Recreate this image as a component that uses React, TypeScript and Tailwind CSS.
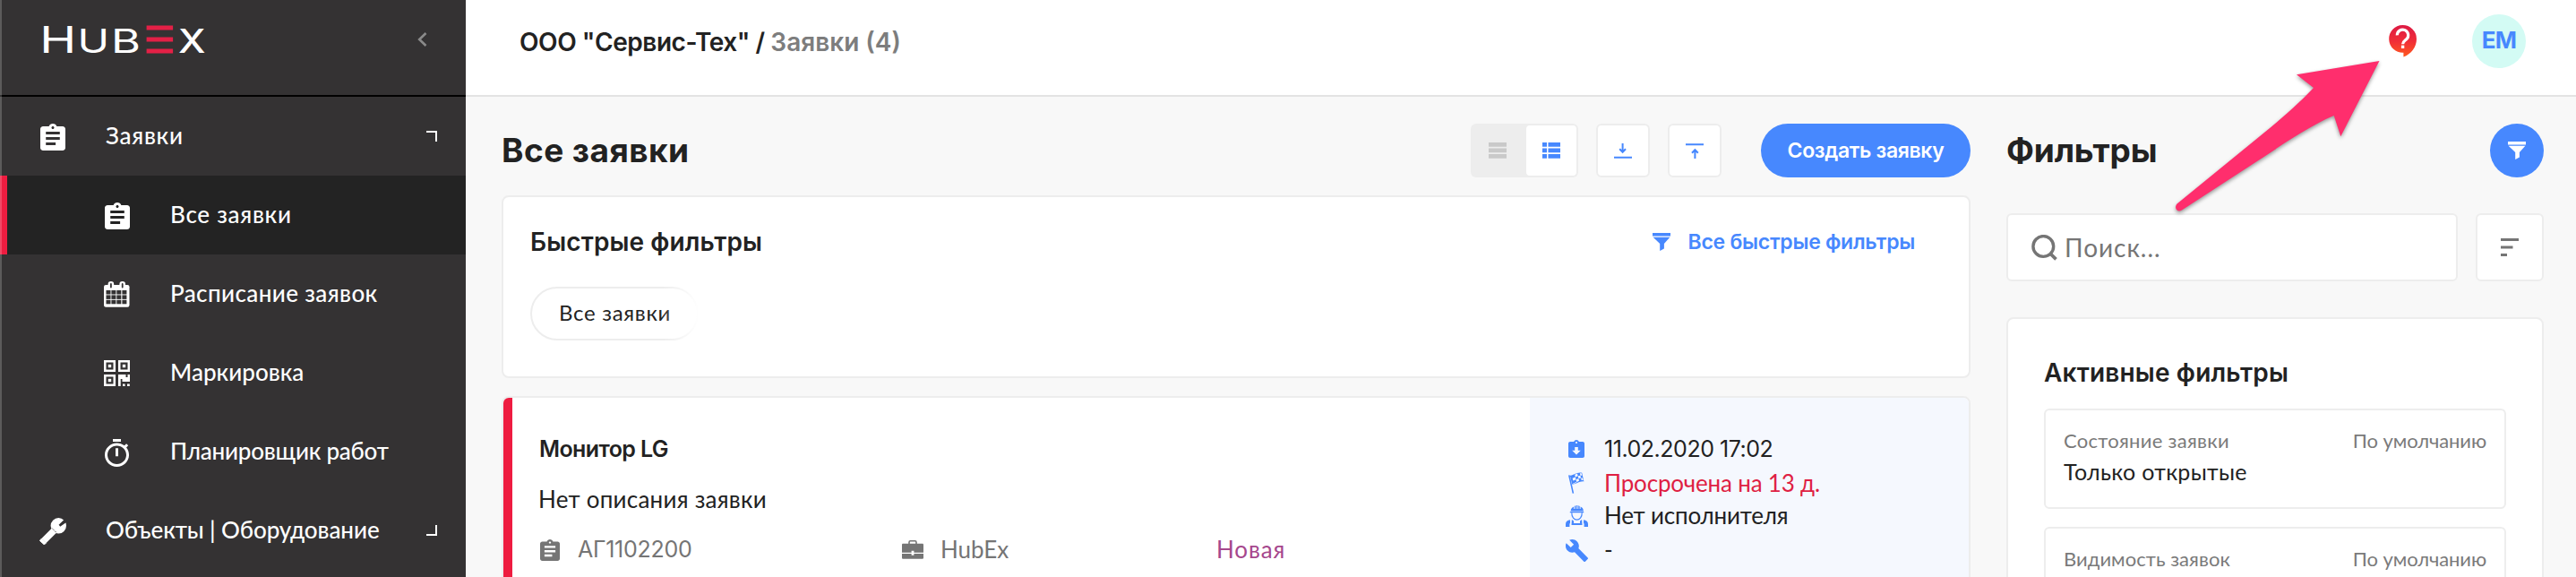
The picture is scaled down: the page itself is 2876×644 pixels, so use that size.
import type { ReactNode } from "react";

const LATO = "font-[Lato,'Noto_Sans',sans-serif]";
const INTER = "font-[Inter,'Noto_Sans',sans-serif]";

function Logo() {
  return (
    <svg width="184" height="34" viewBox="48 27 184 34" className="overflow-visible" fontFamily="Inter, sans-serif" fill="#fff" aria-label="HubEx">
      <text x="44.3" y="59" fontSize="41.5" fontWeight="400" textLength="41" lengthAdjust="spacingAndGlyphs">H</text>
      <text x="86.5" y="58.6" fontSize="36.5" fontWeight="400" textLength="35.5" lengthAdjust="spacingAndGlyphs">U</text>
      <text x="124" y="59" fontSize="36.5" fontWeight="400" textLength="33" lengthAdjust="spacingAndGlyphs">B</text>
      <g fill="#e32046">
        <rect x="163.6" y="28.5" width="29.5" height="5" />
        <rect x="163.6" y="41.5" width="29.5" height="5" />
        <rect x="163.6" y="54.5" width="29.5" height="5" />
      </g>
      <text x="199" y="59" fontSize="36.5" fontWeight="500" textLength="30.5" lengthAdjust="spacingAndGlyphs">X</text>
    </svg>
  );
}

function Clipboard({ className }: { className: string }) {
  return (
    <svg viewBox="3 1 18 20" preserveAspectRatio="none" className={className} fill="currentColor">
      <path d="M19 3h-4.18C14.4 1.84 13.3 1 12 1c-1.3 0-2.4.84-2.82 2H5c-1.1 0-2 .9-2 2v14c0 1.1.9 2 2 2h14c1.1 0 2-.9 2-2V5c0-1.1-.9-2-2-2zm-7 0c.55 0 1 .45 1 1s-.45 1-1 1-1-.45-1-1 .45-1 1-1zm2 14H7v-2h7v2zm3-4H7v-2h10v2zm0-4H7V7h10v2z" />
    </svg>
  );
}

function Calendar() {
  const cols = [2.5, 8.4, 14.3, 20.4];
  const rows = [10, 15.4, 20.8];
  return (
    <svg width="29" height="29" viewBox="0 0 29 29">
      <rect x="0" y="4" width="28.5" height="24.8" rx="2.2" fill="#fff" />
      <rect x="4.6" y="0" width="6.6" height="9" rx="3.2" fill="#fff" />
      <rect x="17.4" y="0" width="6.6" height="9" rx="3.2" fill="#fff" />
      <rect x="7" y="2" width="1.8" height="5.4" rx=".9" fill="#343233" />
      <rect x="19.8" y="2" width="1.8" height="5.4" rx=".9" fill="#343233" />
      {rows.map((y) => cols.map((x) => <rect key={`${x}-${y}`} x={x} y={y} width="5" height="4.5" fill="#343233" />))}
    </svg>
  );
}

function QrCode() {
  return (
    <svg width="29" height="29" viewBox="0 0 29 29" fill="#fff">
      {[[0, 0], [16, 0], [0, 16]].map(([x, y]) => (
        <g key={`${x}-${y}`}>
          <rect x={x + 1.25} y={y + 1.25} width="10.5" height="10.5" fill="none" stroke="#fff" strokeWidth="2.5" />
          <rect x={x + 4.8} y={y + 4.8} width="3.4" height="3.4" />
        </g>
      ))}
      <path d="M16 16h8.500v3h2v-3H29v8h-8.500v-3h-1.800v8H16zM21 26.400h2.600V29H21zM26 26.400h2.800V29H26z" />
    </svg>
  );
}

function Stopwatch() {
  return (
    <svg width="27" height="31" viewBox="3 1 18 21" preserveAspectRatio="none" fill="#fff" className="mt-0.5">
      <path d="M15 1H9v2h6V1zm-4 13h2V8h-2v6zm8.03-6.61l1.42-1.42c-.43-.51-.9-.99-1.41-1.41l-1.42 1.42C16.07 4.74 14.12 4 12 4c-4.97 0-9 4.03-9 9s4.02 9 9 9 9-4.03 9-9c0-2.12-.74-4.07-1.97-5.61zM12 20c-3.87 0-7-3.13-7-7s3.13-7 7-7 7 3.13 7 7-3.13 7-7 7z" />
    </svg>
  );
}

function Spanner() {
  return (
    <svg width="30" height="30" viewBox="0 0 30 30" className="mt-0.5">
      <path d="M5 25.5 17 13.5" stroke="#fff" strokeWidth="7.4" strokeLinecap="butt" />
      <path d="M2.5 23 7.6 28.1 5.2 29.8 .4 25.4z" fill="#fff" stroke="#fff" strokeWidth="1" strokeLinejoin="round" />
      <circle cx="21.3" cy="8.8" r="8.7" fill="#fff" />
      <path d="M30.5-.5 26.5 3 21.6 7.7 23.2 9.8 30 5z" fill="#343233" />
      <path d="M14 11.5 19.3 16.8" stroke="#343233" strokeWidth=".9" strokeDasharray="1.6 .9" />
    </svg>
  );
}

function Wrench() {
  return (
    <svg width="25" height="25" viewBox="1 1 22 22" fill="#4788fe">
      <path d="M22.7 19l-9.1-9.1c.9-2.3.4-5-1.5-6.9-2-2-5-2.4-7.4-1.3L9 6 6 9 1.6 4.7C.4 7.1.9 10.1 2.9 12.1c1.9 1.9 4.6 2.4 6.9 1.5l9.1 9.1c.4.4 1 .4 1.4 0l2.3-2.3c.5-.4.5-1.1.1-1.4z" />
    </svg>
  );
}

function ReceivedIcon() {
  return (
    <svg width="18" height="20" viewBox="3 1 18 20" fill="#4788fe">
      <path d="M19 3h-4.18C14.4 1.84 13.3 1 12 1c-1.3 0-2.4.84-2.82 2H5c-1.1 0-2 .9-2 2v14c0 1.1.9 2 2 2h14c1.1 0 2-.9 2-2V5c0-1.1-.9-2-2-2zm-7 0c.55 0 1 .45 1 1s-.45 1-1 1-1-.45-1-1 .45-1 1-1zm0 14.5l-4.8-4.8h3V9h3.6v3.7h3L12 17.5z" />
    </svg>
  );
}

function FlagIcon() {
  return (
    <svg width="18" height="24" viewBox="0 0 18 24">
      <path d="M.8 3.4 5.4 23.6" stroke="#4788fe" strokeWidth="1.6" />
      <path d="M1.8 3.6C6 4 9-.4 15.2.8L17.4 10.4C12 9.6 8.6 14 4.2 13.4z" fill="#4788fe" />
      <g fill="#f5f8fe">
        <path d="M7.2 2.8 10 1.6 10.7 4.3 7.9 5.6zM12.9 1.2 14.7 1.2 15.3 3.8 13.4 3.8zM4.6 6.8 7.9 5.6 8.5 8.3 5.3 9.4zM10.7 4.3 13.4 3.8 14.1 6.4 11.4 7zM8.5 8.3 11.4 7 12 9.7 9.2 11zM14.1 6.4 16 6.4 16.6 9.1 14.7 9.1zM5.3 12.3 6 12.3 9.2 11 8.9 12.1 5.6 13z" />
      </g>
    </svg>
  );
}

function WorkerIcon() {
  return (
    <svg width="25" height="24" viewBox="0 0 25 24" fill="#4788fe">
      <path d="M5.6 6.4C5.8 3.6 7.3 2.2 9 1.5V4h.9V1l1.5-.9V4h.8V0h1.2v4h.8V.2l1.5.9V4h.9V1.6c1.7.7 3.1 2 3.3 4.8zM4.8 6.9h15.4v1.3H4.8z" />
      <path d="M6.8 8.2c-.2 5.4 2.8 8 5.7 8s5.900-2.600 5.700-8" fill="none" stroke="#4788fe" strokeWidth="1.2" />
      <path d="M6.9 15.9 9 17.6v2.3h7v-2.3l2.1-1.7.4 6.1H6.5z" />
      <path d="M5 16.2v3.5l-.6 1V24H0v-3c0-3 1.800-4.400 5-4.800zM20 16.200v3.500l.6 1V24H25v-3c0-3-1.800-4.400-5-4.800z" />
    </svg>
  );
}

function Briefcase() {
  return (
    <svg width="24" height="21" viewBox="0 0 24 21" fill="#757575">
      <path d="M8 4V2.200C8 1.300 8.600.8 9.400.8h5.200c.8 0 1.400.5 1.400 1.400V4" fill="none" stroke="#757575" strokeWidth="1.600" />
      <path d="M1.300 3.700h21.400c.8 0 1.300.5 1.300 1.300v8.700H13.400v-1.900h-2.800v1.900H0V5c0-.8.5-1.300 1.300-1.300z" />
      <path d="M0 15h10.600v1.800h2.800V15H24v4.500c0 .8-.5 1.300-1.300 1.300H1.300C.5 20.800 0 20.300 0 19.500z" />
    </svg>
  );
}

function Funnel() {
  return (
    <svg width="20" height="20" viewBox="0 0 20 20" fill="currentColor">
      <path d="M0 0h20v3.400H0zM.6 4.800h18.800L12.900 12v5.400L8.200 20v-8z" />
    </svg>
  );
}

function HelpBubble() {
  return (
    <svg width="31" height="36" viewBox="0 0 31 36" className="overflow-visible">
      <defs>
        <linearGradient id="help" x1="0" y1="0" x2="0" y2="1">
          <stop offset="0" stopColor="#dd1a44" />
          <stop offset=".5" stopColor="#f02d38" />
          <stop offset="1" stopColor="#ff5a1f" />
        </linearGradient>
      </defs>
      <path d="M16.400 35.600V30.800A15.400 15.400 0 1 1 31 15.400C31 24.500 25 32 16.400 35.600z" fill="url(#help)" />
      <path d="M9.300 11.400a6.200 6.200 0 1 1 10.200 4.600c-2 1.700-3.900 2.700-3.900 5.200" fill="none" stroke="#fff" strokeWidth="3.200" />
      <rect x="13.900" y="22.600" width="3.400" height="3.400" fill="#fff" />
    </svg>
  );
}

function NavRow({ icon, label, tracking, child, active, corner }: { icon: ReactNode; label: string; tracking: string; child?: boolean; active?: boolean; corner?: "open" | "closed" }) {
  return (
    <div className={`flex h-[88px] shrink-0 items-center text-white ${active ? "bg-[#232323]" : ""}`}>
      <div className={`h-full w-2 shrink-0 ${active ? "bg-[#ee1c40]" : ""}`} />
      <div className={`flex shrink-0 items-center justify-center ${child ? "w-[182px] pl-[63px]" : "w-[110px] pr-2"}`}>{icon}</div>
      <span className={`grow whitespace-nowrap pb-0.5 text-[26px] font-medium ${tracking}`}>{label}</span>
      {corner && <div className={`mr-8 size-3 border-r-[2.5px] border-white ${corner === "open" ? "border-t-[2.5px]" : "border-b-[2.5px]"}`} />}
    </div>
  );
}

function Sidebar() {
  return (
    <aside className="relative flex h-full w-[520px] shrink-0 flex-col bg-[#343233]">
      <div className="flex h-[108px] shrink-0 items-center justify-between border-b-2 border-black pb-[18px] pl-12 pr-[43px]">
        <Logo />
        <svg width="11" height="16" viewBox="0 0 11 16" fill="none" stroke="#8a8a8a" strokeWidth="2.600">
          <path d="M9.500 1 2.200 8 9.500 15" />
        </svg>
      </div>
      <NavRow icon={<Clipboard className="mt-0.5 h-[30px] w-7" />} label="Заявки" tracking="tracking-[0.74px]" corner="open" />
      <NavRow child active icon={<Clipboard className="mt-0.5 h-[30px] w-7" />} label="Все заявки" tracking="tracking-[0.73px]" />
      <NavRow child icon={<Calendar />} label="Расписание заявок" tracking="tracking-[0.4px]" />
      <NavRow child icon={<QrCode />} label="Маркировка" tracking="tracking-[0.03px]" />
      <NavRow child icon={<Stopwatch />} label="Планировщик работ" tracking="tracking-[-0.22px]" />
      <NavRow icon={<Spanner />} label="Объекты | Оборудование" tracking="tracking-[-0.08px]" corner="closed" />
      <div className="absolute inset-y-0 left-0 w-0.5 bg-white/20" />
    </aside>
  );
}

function Header() {
  return (
    <header className={`flex h-[108px] shrink-0 items-center border-b-2 border-[#e3e3e3] bg-white pb-[14px] pl-[60px] pr-14 ${INTER}`}>
      <span className="whitespace-pre pt-0.5 text-[28px] font-semibold tracking-[-0.45px] text-[#222]">ООО "Сервис-Тех" / </span>
      <span className="grow pt-0.5 text-[28px] font-semibold text-[#7d7d7d]">Заявки (4)</span>
      <HelpBubble />
      <div className="ml-[62px] flex size-[60px] items-center justify-center rounded-full bg-[#d3fbf4] text-[26px] font-bold leading-none tracking-[-0.8px] text-[#4788fe]">
        <span className="pb-0.5">EM</span>
      </div>
    </header>
  );
}

function Toolbar() {
  return (
    <div className="flex h-[60px] items-center">
      <h1 className={`grow pb-0.5 text-[37px] font-bold leading-none tracking-[0.45px] text-[#222] ${INTER}`}>Все заявки</h1>
      <div className="flex h-[60px] w-[120px] rounded-md bg-[#ededed] p-0.5">
        <div className="flex flex-1 items-center justify-center pr-1">
          <svg width="20" height="18" viewBox="0 0 20 18" fill="#c9c9c9">
            <path d="M0 0h20v4.800H0zM0 6.500h20v4.800H0zM0 13h20v4.800H0z" />
          </svg>
        </div>
        <div className="flex w-14 items-center justify-center rounded bg-white">
          <svg width="20" height="18" viewBox="0 0 20 18" fill="#4788fe">
            <path d="M0 0h5v4.800H0zM0 6.500h5v4.800H0zM0 13h5v4.800H0zM6.500 0H20v4.800H6.500zM6.500 6.500H20v4.800H6.500zM6.500 13H20v4.800H6.500z" />
          </svg>
        </div>
      </div>
      <div className="ml-5 flex size-[60px] items-center justify-center rounded-md border-2 border-[#ededed] bg-white">
        <svg width="20" height="17" viewBox="0 0 20 17" fill="none" stroke="#4788fe" strokeWidth="2">
          <path d="M0 15.800h20M9.600 0v9.500M6.200 6.200l3.400 3.600L13 6.200" />
        </svg>
      </div>
      <div className="ml-5 flex size-[60px] items-center justify-center rounded-md border-2 border-[#ededed] bg-white">
        <svg width="20" height="17" viewBox="0 0 20 17" fill="none" stroke="#4788fe" strokeWidth="2">
          <path d="M0 1.200h20M10.400 17V7.500M7 10.800l3.400-3.600 3.400 3.600" />
        </svg>
      </div>
      <button className={`ml-11 h-[60px] w-[234px] rounded-full bg-[#4788fe] text-[23px] font-semibold tracking-[-0.35px] text-white ${INTER}`}>Создать заявку</button>
    </div>
  );
}

function QuickFilters() {
  return (
    <section className="mt-5 h-[204px] rounded-lg border-2 border-[#ededed] bg-white pl-[30px] pr-[60px] pt-[30px]">
      <div className={`flex h-10 items-center ${INTER}`}>
        <h2 className="grow text-[28px] font-semibold tracking-[0.1px] text-[#222]">Быстрые фильтры</h2>
        <div className="flex items-center gap-5 text-[#4788fe]">
          <Funnel />
          <span className="text-[23px] font-semibold tracking-[-0.27px]">Все быстрые фильтры</span>
        </div>
      </div>
      <div className="relative mt-[30px] flex h-[60px] w-[188px] items-center rounded-full border-2 border-[#ededed] pl-[30px] text-2xl tracking-[0.7px] text-[#222]">
        <span className="pb-0.5">Все заявки</span>
        <div className="absolute -inset-y-0.5 -right-0.5 w-10 bg-linear-to-r from-white/0 to-white" />
      </div>
    </section>
  );
}

function OrderCard() {
  return (
    <article className="mt-5 flex h-[280px] overflow-hidden rounded-lg border-2 border-[#ededed] bg-white">
      <div className="w-[10px] bg-[#ee1c40]" />
      <div className="flex w-[1136px] flex-col gap-5 pl-[29px] pt-[39px] text-[26px] leading-9 text-[#222]">
        <h3 className={`pl-px pt-px text-[25px] font-semibold leading-[35px] tracking-[-0.6px] ${INTER}`}>Монитор LG</h3>
        <p className="tracking-[0.24px]">Нет описания заявки</p>
        <div className="flex text-[#757575]">
          <div className="flex w-[406px] items-center gap-[20px]">
            <Clipboard className="ml-0.5 mt-0.5 h-6 w-[22px]" />
            <span className={`text-[25px] tracking-[-0.26px] ${INTER}`}>АГ1102200</span>
          </div>
          <div className="flex w-[351px] items-center gap-[19px]">
            <Briefcase />
            <span>HubEx</span>
          </div>
          <span className="tracking-[0.9px] text-[#a6478d]">Новая</span>
        </div>
      </div>
      <div className="flex grow flex-col bg-[#f5f8fe] pl-9 pt-[38px] text-[26px] text-[#222]">
        <div className="flex h-[38px] items-center gap-[15px]">
          <div className="flex w-8 justify-center"><ReceivedIcon /></div>
          <span className={`pt-0.5 text-[25px] tracking-[-0.47px] ${INTER}`}>11.02.2020 17:02</span>
        </div>
        <div className="flex h-[38px] items-center gap-[15px]">
          <div className="flex w-8 justify-center"><FlagIcon /></div>
          <span className="tracking-[-0.19px] text-[#df1f43]">Просрочена на 13 д.</span>
        </div>
        <div className="flex h-9 items-center gap-[15px]">
          <div className="flex w-8 justify-center"><WorkerIcon /></div>
          <span className="pb-0.5 tracking-[-0.2px]">Нет исполнителя</span>
        </div>
        <div className="flex h-10 items-center gap-[15px]">
          <div className="flex w-8 justify-center"><Wrench /></div>
          <span className="pb-0.5">-</span>
        </div>
      </div>
    </article>
  );
}

function FilterBox({ label, tracking, value }: { label: string; tracking: string; value?: string }) {
  return (
    <div className="h-28 shrink-0 rounded-md border-2 border-[#ededed] px-5 pt-[18px]">
      <div className="flex justify-between text-[22px] leading-8 text-[#7a7a7a]">
        <span className={tracking}>{label}</span>
        <span className="tracking-[-0.1px]">По умолчанию</span>
      </div>
      {value && <p className="text-[25px] leading-9 tracking-[0.3px] text-[#222]">{value}</p>}
    </div>
  );
}

function FiltersPanel() {
  return (
    <aside className="flex w-[600px] shrink-0 flex-col">
      <div className="flex h-[60px] shrink-0 items-center justify-between">
        <h2 className={`pb-0.5 text-[37px] font-bold leading-none tracking-[-0.15px] text-[#222] ${INTER}`}>Фильтры</h2>
        <div className="flex size-[60px] items-center justify-center rounded-full bg-[#4788fe] text-white"><Funnel /></div>
      </div>
      <div className="mt-10 flex h-[76px] shrink-0 gap-5">
        <div className="flex grow items-center rounded-md border-2 border-[#ededed] bg-white pl-[26px] text-[28px] tracking-[0.97px] text-[#757575]">
          <svg width="29" height="29" viewBox="0 0 29 29" fill="none" stroke="#757575" strokeWidth="3.400">
            <circle cx="13.300" cy="13" r="11.400" />
            <path d="M21 21 27.500 27.300" strokeWidth="3.800" />
          </svg>
          <span className="ml-2">Поиск...</span>
        </div>
        <div className="flex w-[76px] items-center justify-center rounded-md border-2 border-[#ededed] bg-white">
          <svg width="20" height="20" viewBox="0 0 20 20" fill="#757575">
            <path d="M0 0h20v3H0zM0 8.400h13.500v3H0zM0 17h7v3H0z" />
          </svg>
        </div>
      </div>
      <div className="mt-10 flex h-[600px] shrink-0 flex-col gap-5 rounded-lg border-2 border-[#ededed] bg-white px-10 pt-10">
        <h3 className={`h-10 shrink-0 text-[28px] font-semibold leading-10 tracking-[0.17px] text-[#222] ${INTER}`}>Активные фильтры</h3>
        <FilterBox label="Состояние заявки" tracking="tracking-[0.29px]" value="Только открытые" />
        <FilterBox label="Видимость заявок" tracking="tracking-[0.05px]" />
      </div>
    </aside>
  );
}

function Pointer() {
  return (
    <svg className="pointer-events-none absolute left-[2420px] top-[60px] drop-shadow-[0_2px_2px_rgba(0,0,0,0.4)]" width="250" height="190" viewBox="2420 60 250 190">
      <path d="M2656.500 68 2564 83.300 2583 98C2566 116 2545 134.500 2520 154.500L2430.500 227.500C2426.500 232.500 2431.500 238 2436 234.500L2513 184.500C2545 164 2575 142 2605.700 129L2613.300 152.300z" fill="#ff2e6d" />
    </svg>
  );
}

export default function App() {
  return (
    <div className={`relative flex h-[644px] w-[2876px] overflow-hidden bg-[#f8f8f8] ${LATO}`}>
      <Sidebar />
      <div className="flex min-w-0 grow flex-col">
        <Header />
        <main className="flex gap-10 pl-10 pr-9 pt-[30px]">
          <div className="flex w-[1640px] shrink-0 flex-col">
            <Toolbar />
            <QuickFilters />
            <OrderCard />
          </div>
          <FiltersPanel />
        </main>
      </div>
      <Pointer />
    </div>
  );
}
